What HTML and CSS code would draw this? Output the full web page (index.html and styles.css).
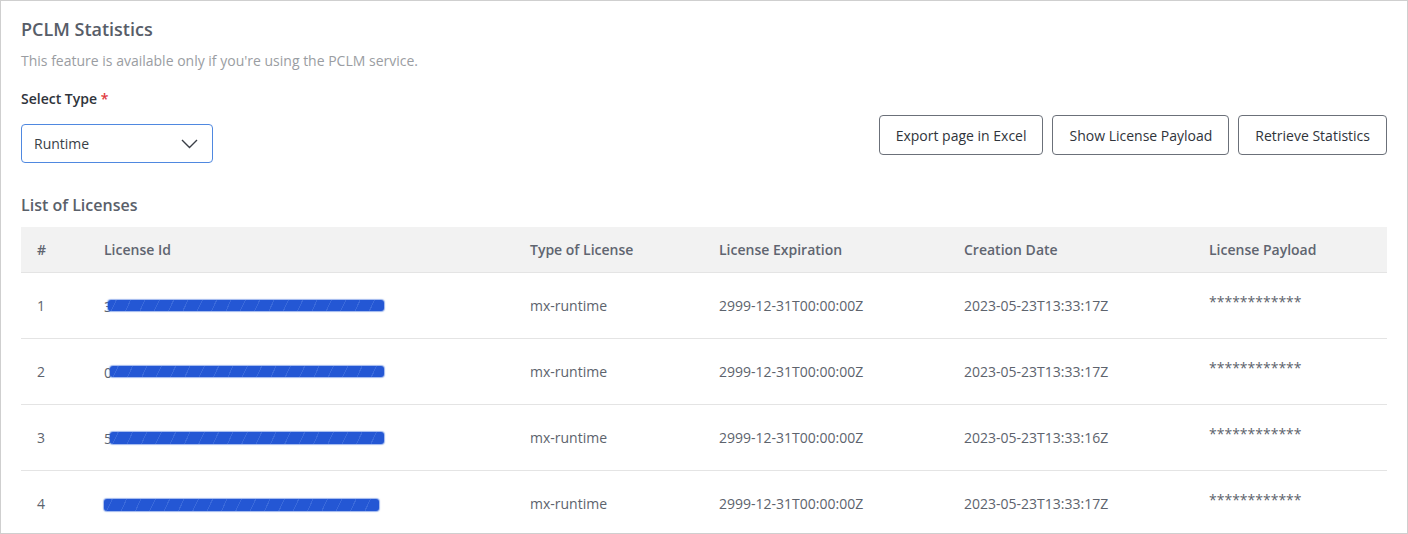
FILE: index.html
```html
<!DOCTYPE html>
<html lang="en">
<head>
<meta charset="utf-8">
<title>PCLM Statistics</title>
<link rel="stylesheet" href="styles.css">
</head>
<body>
<div class="frame">
  <h1 class="title">PCLM Statistics</h1>
  <p class="subtitle">This feature is available only if you're using the PCLM service.</p>
  <div class="toolbar">
    <div class="field">
      <label class="label">Select Type <span class="req">*</span></label>
      <div class="select">
        <span>Runtime</span>
        <svg class="chev" width="17" height="10" viewBox="0 0 17 10"><polyline points="1,1 8.5,8.5 16,1" fill="none" stroke="#3a3f47" stroke-width="1.4"/></svg>
      </div>
    </div>
    <div class="buttons">
      <button class="btn">Export page in Excel</button>
      <button class="btn">Show License Payload</button>
      <button class="btn">Retrieve Statistics</button>
    </div>
  </div>
  <h2 class="section">List of Licenses</h2>
  <table class="grid">
    <thead>
      <tr>
        <th class="c-num">#</th>
        <th class="c-id">License Id</th>
        <th class="c-type">Type of License</th>
        <th class="c-exp">License Expiration</th>
        <th class="c-cre">Creation Date</th>
        <th class="c-pay">License Payload</th>
      </tr>
    </thead>
    <tbody>
      <tr>
        <td>1</td>
        <td><span class="lid">3</span><span class="redact r1"></span></td>
        <td>mx-runtime</td>
        <td>2999-12-31T00:00:00Z</td>
        <td>2023-05-23T13:33:17Z</td>
        <td class="stars">************</td>
      </tr>
      <tr>
        <td>2</td>
        <td><span class="lid">0</span><span class="redact r2"></span></td>
        <td>mx-runtime</td>
        <td>2999-12-31T00:00:00Z</td>
        <td>2023-05-23T13:33:17Z</td>
        <td class="stars">************</td>
      </tr>
      <tr>
        <td>3</td>
        <td><span class="lid">5</span><span class="redact r3"></span></td>
        <td>mx-runtime</td>
        <td>2999-12-31T00:00:00Z</td>
        <td>2023-05-23T13:33:16Z</td>
        <td class="stars">************</td>
      </tr>
      <tr>
        <td>4</td>
        <td><span class="redact r4"></span></td>
        <td>mx-runtime</td>
        <td>2999-12-31T00:00:00Z</td>
        <td>2023-05-23T13:33:17Z</td>
        <td class="stars">************</td>
      </tr>
    </tbody>
  </table>
</div>
</body>
</html>
```
FILE: styles.css
```css
* { box-sizing: border-box; }
html, body { margin: 0; padding: 0; }
body {
  font-family: "Open Sans", "Noto Sans", sans-serif;
  color: #5b616b;
  background: #fff;
}
.frame {
  width: 1408px;
  height: 534px;
  border: 1px solid #cfcfcf;
  padding: 15px 20px 0 20px;
  overflow: hidden;
}
.title {
  margin: 0;
  font-size: 18px;
  font-weight: 600;
  line-height: 26px;
  color: #575d68;
}
.subtitle {
  margin: 9px 0 0 0;
  font-size: 14px;
  line-height: 20px;
  color: #9a9da2;
}
.toolbar {
  display: flex;
  justify-content: space-between;
  align-items: flex-start;
  margin-top: 18px;
}
.field { display: flex; flex-direction: column; }
.label {
  font-size: 14px;
  font-weight: 600;
  line-height: 20px;
  color: #2f343b;
}
.req { color: #e0393e; }
.select {
  margin-top: 15px;
  width: 192px;
  height: 39px;
  border: 1.5px solid #4f88e0;
  border-radius: 4px;
  display: flex;
  align-items: center;
  justify-content: space-between;
  padding: 0 14px 0 12px;
  font-size: 14px;
  color: #3a3f47;
}
.chev { display: block; }
.buttons {
  display: flex;
  gap: 9px;
  margin-top: 26px;
}
.btn {
  font-family: inherit;
  font-size: 14px;
  color: #2f343b;
  background: #fff;
  border: 1px solid #6b7079;
  border-radius: 4px;
  height: 40px;
  padding: 0 16px;
  cursor: pointer;
}
.section {
  margin: 31px 0 0 0;
  font-size: 16px;
  font-weight: 600;
  line-height: 22px;
  color: #5a606a;
}
.grid {
  margin-top: 11px;
  width: 1366px;
  border-collapse: collapse;
  table-layout: fixed;
  font-size: 14px;
}
.grid th {
  background: #f2f2f2;
  height: 45px;
  text-align: left;
  font-weight: 600;
  color: #5f6570;
  padding: 0 0 0 16px;
  border-bottom: 1px solid #e4e4e4;
}
.grid td {
  height: 66px;
  padding: 0 0 0 16px;
  border-bottom: 1px solid #e4e4e4;
  color: #5d636d;
  white-space: nowrap;
}
.c-num { width: 67px; }
.c-id { width: 426px; }
.c-type { width: 189px; }
.c-exp { width: 245px; }
.c-cre { width: 245px; }
.c-pay { width: 194px; }
.grid td.stars { padding-bottom: 8px; }
.lid { vertical-align: middle; }
.redact {
  display: inline-block;
  vertical-align: middle;
  height: 11px;
  background-color: #2457d4;
  background-image: repeating-linear-gradient(115deg, rgba(255,255,255,0) 0 7px, rgba(110,150,235,0.3) 7px 8px, rgba(255,255,255,0) 8px 13px);
  border-radius: 3px;
  box-shadow: 0 0 1px 1px rgba(60,110,220,0.5);
}
.r1 { width: 276px; margin-left: -4px; }
.r2 { width: 274px; margin-left: -2px; }
.r3 { width: 274px; margin-left: -2px; height: 12px; }
.r4 { width: 275px; height: 12px; }
```
